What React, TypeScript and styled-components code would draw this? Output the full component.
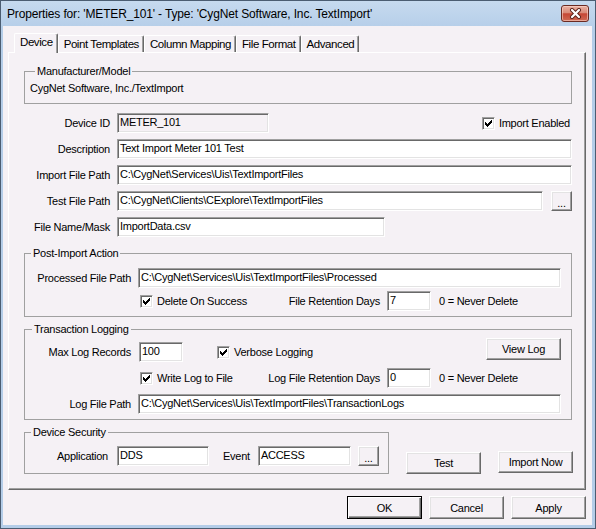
import React from 'react';
import styled, { createGlobalStyle, css } from 'styled-components';

const BG = '#f5f1f5';
const FONT = `"Liberation Sans", Arial, sans-serif`;

const Global = createGlobalStyle`
  html, body { margin: 0; padding: 0; background: #fff; }
  body { font-family: ${FONT}; font-size: 11px; color: #000; }
  * { box-sizing: border-box; }
`;

const Window = styled.div`
  width: 596px;
  height: 529px;
  display: flex;
  flex-direction: column;
  background: linear-gradient(#c6daef, #b4cde8 30px);
  border: 1px solid #4b5d72;
  padding: 0 3px 3px 2px;
`;

const TitleBar = styled.div`
  height: 25px;
  display: flex;
  align-items: center;
  justify-content: space-between;
  padding: 0 3px 0 4px;
`;

const Title = styled.span`
  font-size: 12px;
  letter-spacing: -0.15px;
  white-space: nowrap;
  color: #000;
`;

const CloseButton = styled.div`
  width: 28px;
  height: 17px;
  border: 1px solid #6b2a22;
  border-radius: 3px;
  background: linear-gradient(#eab1a3 0%, #d98a78 45%, #c64634 52%, #cf6a55 100%);
  box-shadow: inset 0 0 0 1px rgba(255, 220, 210, 0.55);
  display: flex;
  align-items: center;
  justify-content: center;
`;

const Client = styled.div`
  flex: 1;
  background: ${BG};
  padding: 7px 6px 6px 5px;
  display: flex;
  flex-direction: column;
`;

const TabStrip = styled.div`
  display: flex;
  align-items: flex-end;
  padding-left: 6px;
`;

const Tab = styled.div<{ $active?: boolean }>`
  height: 17px;
  padding: 0 4px 0 5px;
  line-height: 16px;
  font-size: 11.5px;
  letter-spacing: -0.42px;
  white-space: nowrap;
  background: ${BG};
  border-top: 1px solid #fff;
  border-left: 1px solid #fff;
  border-right: 1px solid #696969;
  box-shadow: inset -1px 0 #a0a0a0;
  border-radius: 2px 2px 0 0;
  ${(p) =>
    p.$active &&
    css`
      height: 20px;
      padding-bottom: 3px;
      margin-bottom: -1px;
      position: relative;
      z-index: 1;
    `}
`;

const Panel = styled.div`
  border-top: 1px solid #fff;
  border-left: 1px solid #fff;
  border-right: 1px solid #696969;
  border-bottom: 1px solid #696969;
  box-shadow: inset -1px -1px #a0a0a0;
  padding: 12px 13px 15px 15px;
  display: flex;
  flex-direction: column;
`;

const GroupBox = styled.fieldset<{ $pt: number; $pb: number; $mt?: number; $w?: number }>`
  margin: ${(p) => p.$mt ?? 0}px 0 0 0;
  min-width: 0;
  ${(p) => (p.$w ? `width: ${p.$w}px; flex: none;` : '')}
  border: 1px solid #a0a0a0;
  padding: ${(p) => p.$pt}px 0 ${(p) => p.$pb}px 0;
`;

const Legend = styled.legend<{ $inset: number }>`
  margin-left: ${(p) => p.$inset}px;
  padding: 0 2px;
  line-height: 13px;
  font-size: 11px;
  letter-spacing: -0.25px;
  white-space: nowrap;
`;

const PlainText = styled.div`
  padding-left: 5px;
  line-height: 13px;
  letter-spacing: -0.25px;
  white-space: nowrap;
`;

const FormGrid = styled.div<{ $labelW: number; $rowGap: number; $mt?: number; $px?: string; $rows?: string }>`
  display: grid;
  grid-template-columns: ${(p) => p.$labelW}px 1fr;
  ${(p) => (p.$rows ? `grid-template-rows: ${p.$rows};` : 'grid-auto-rows: 20px;')}
  column-gap: 7px;
  row-gap: ${(p) => p.$rowGap}px;
  align-items: center;
  margin-top: ${(p) => p.$mt ?? 0}px;
  padding: ${(p) => p.$px ?? '0'};
`;

const Label = styled.div<{ $end?: boolean }>`
  height: 20px;
  line-height: 20px;
  text-align: right;
  white-space: nowrap;
  letter-spacing: -0.25px;
  ${(p) => (p.$end ? 'align-self: end;' : '')}
`;

const Field = styled.div<{ $end?: boolean }>`
  display: flex;
  align-items: center;
  min-width: 0;
  ${(p) => (p.$end ? 'align-self: stretch; align-items: flex-end;' : '')}
`;

const Spacer = styled.div`
  flex: 1;
`;

const TextBox = styled.div<{ $w?: number; $disabled?: boolean; $ml?: number }>`
  height: 20px;
  ${(p) => (p.$w ? `width: ${p.$w}px; flex: none;` : 'flex: 1; min-width: 0;')}
  margin-left: ${(p) => p.$ml ?? 0}px;
  border: 1px solid;
  border-color: #a0a0a0 #fff #fff #a0a0a0;
  box-shadow: inset 1px 1px #696969, inset -1px -1px #e3e3e3;
  background: ${(p) => (p.$disabled ? BG : '#fff')};
  padding: 0 3px 0 2px;
  line-height: 17px;
  letter-spacing: -0.25px;
  white-space: nowrap;
  overflow: hidden;
`;

const Button = styled.button<{ $w: number; $h: number; $ml?: number; $mb?: number; $primary?: boolean; $self?: string }>`
  width: ${(p) => p.$w}px;
  height: ${(p) => p.$h}px;
  flex: none;
  margin: 0 0 ${(p) => p.$mb ?? 0}px ${(p) => p.$ml ?? 0}px;
  ${(p) => (p.$self ? `align-self: ${p.$self};` : '')}
  padding: 0;
  font-family: ${FONT};
  font-size: 11px;
  letter-spacing: -0.25px;
  color: #000;
  background: ${BG};
  border: 1px solid;
  border-color: #fff #696969 #696969 #fff;
  box-shadow: inset -1px -1px #a0a0a0, inset 1px 1px #e3e3e3;
  ${(p) =>
    p.$primary &&
    css`
      border-color: #000;
      box-shadow: inset 1px 1px #fff, inset -1px -1px #696969, inset -2px -2px #a0a0a0;
    `}
`;

const EllipsisButton = styled(Button)`
  line-height: 1;
  padding-top: 5px;
`;

const CheckOption = styled.div<{ $ml?: number; $mr?: number }>`
  display: flex;
  align-items: center;
  gap: 4px;
  height: 20px;
  margin-left: ${(p) => p.$ml ?? 0}px;
  margin-right: ${(p) => p.$mr ?? 0}px;
  white-space: nowrap;
  letter-spacing: -0.25px;
`;

const Box = styled.span`
  width: 13px;
  height: 13px;
  flex: none;
  border: 1px solid;
  border-color: #a0a0a0 #fff #fff #a0a0a0;
  box-shadow: inset 1px 1px #696969, inset -1px -1px #e3e3e3;
  background: #fff;
  display: flex;
  align-items: center;
  justify-content: center;
`;

const Note = styled.div`
  width: 122px;
  flex: none;
  margin-left: 8px;
  white-space: nowrap;
  letter-spacing: -0.25px;
`;

const Row = styled.div<{ $mt?: number }>`
  display: flex;
  align-items: flex-end;
  margin-top: ${(p) => p.$mt ?? 0}px;
`;

const InlineFields = styled.div`
  display: flex;
  align-items: center;
  padding: 0 9px;
`;

const InlineLabel = styled.div<{ $ml?: number; $w?: number }>`
  margin-left: ${(p) => p.$ml ?? 0}px;
  margin-right: 8px;
  ${(p) => (p.$w ? `width: ${p.$w}px; text-align: right; margin-right: 9px;` : '')}
  flex: none;
  white-space: nowrap;
  letter-spacing: -0.25px;
`;

const ButtonRow = styled.div`
  display: flex;
  justify-content: flex-end;
  gap: 7px;
  margin-top: 6px;
`;

const CheckMark = () => (
  <svg width="7" height="7" viewBox="0 0 7 7" shapeRendering="crispEdges">
    <path
      fill="#000"
      d="M0 2h1v3H0z M1 3h1v3H1z M2 4h1v3H2z M3 3h1v3H3z M4 2h1v3H4z M5 1h1v3H5z M6 0h1v3H6z"
    />
  </svg>
);

const Check = ({ label, ml, mr }: { label: string; ml?: number; mr?: number }) => (
  <CheckOption $ml={ml} $mr={mr}>
    <Box>
      <CheckMark />
    </Box>
    <span>{label}</span>
  </CheckOption>
);

const Retention = ({ check, label, value }: { check: string; label: string; value: string }) => (
  <Field>
    <Check label={check} ml={2} />
    <Spacer />
    <InlineLabel>{label}</InlineLabel>
    <TextBox $w={44} $ml={-1}>{value}</TextBox>
    <Note>0 = Never Delete</Note>
  </Field>
);

export default function App() {
  const tabs = ['Device', 'Point Templates', 'Column Mapping', 'File Format', 'Advanced'];
  return (
    <>
      <Global />
      <Window>
        <TitleBar>
          <Title>Properties for: 'METER_101' - Type: 'CygNet Software, Inc. TextImport'</Title>
          <CloseButton>
            <svg width="13" height="11" viewBox="0 0 13 11">
              <path d="M3 2 L10 9 M10 2 L3 9" stroke="#5a2119" strokeWidth="4" strokeLinecap="round" />
              <path d="M3 2 L10 9 M10 2 L3 9" stroke="#fff" strokeWidth="2.2" strokeLinecap="round" />
            </svg>
          </CloseButton>
        </TitleBar>
        <Client>
          <TabStrip>
            {tabs.map((t, i) => (
              <Tab key={t} $active={i === 0}>
                {t}
              </Tab>
            ))}
          </TabStrip>
          <Panel>
            <GroupBox $pt={4} $pb={8}>
              <Legend $inset={10}>Manufacturer/Model</Legend>
              <PlainText>CygNet Software, Inc./TextImport</PlainText>
            </GroupBox>

            <FormGrid $labelW={86} $rowGap={6} $mt={9}>
              <Label>Device ID</Label>
              <Field>
                <TextBox $w={152} $disabled>
                  METER_101
                </TextBox>
                <Spacer />
                <Check label="Import Enabled" mr={2} />
              </Field>
              <Label>Description</Label>
              <Field>
                <TextBox>Text Import Meter 101 Test</TextBox>
              </Field>
              <Label>Import File Path</Label>
              <Field>
                <TextBox>C:\CygNet\Services\Uis\TextImportFiles</TextBox>
              </Field>
              <Label>Test File Path</Label>
              <Field>
                <TextBox>C:\CygNet\Clients\CExplore\TextImportFiles</TextBox>
                <EllipsisButton $w={21} $h={20} $ml={8}>
                  ...
                </EllipsisButton>
              </Field>
              <Label>File Name/Mask</Label>
              <Field>
                <TextBox $w={268}>ImportData.csv</TextBox>
              </Field>
            </FormGrid>

            <GroupBox $pt={8} $pb={5} $mt={10}>
              <Legend $inset={6}>Post-Import Action</Legend>
              <FormGrid $labelW={97} $rowGap={3} $px="0 10px 0 9px">
                <Label>Processed File Path</Label>
                <Field>
                  <TextBox>C:\CygNet\Services\Uis\TextImportFiles\Processed</TextBox>
                </Field>
                <span />
                <Retention check="Delete On Success" label="File Retention Days" value="7" />
              </FormGrid>
            </GroupBox>

            <GroupBox $pt={2} $pb={5} $mt={6}>
              <Legend $inset={7}>Transaction Logging</Legend>
              <FormGrid $labelW={97} $rowGap={6} $px="0 10px 0 9px" $rows="24px 20px 20px">
                <Label $end>Max Log Records</Label>
                <Field $end>
                  <TextBox $w={44} $ml={1}>
                    100
                  </TextBox>
                  <Check label="Verbose Logging" ml={34} />
                  <Spacer />
                  <Button $w={75} $h={22} $self="flex-start">
                    View Log
                  </Button>
                </Field>
                <span />
                <Retention check="Write Log to File" label="Log File Retention Days" value="0" />
                <Label>Log File Path</Label>
                <Field>
                  <TextBox>C:\CygNet\Services\Uis\TextImportFiles\TransactionLogs</TextBox>
                </Field>
              </FormGrid>
            </GroupBox>

            <Row $mt={6}>
              <GroupBox $pt={7} $pb={7} $w={365}>
                <Legend $inset={6}>Device Security</Legend>
                <InlineFields>
                  <InlineLabel $w={74}>Application</InlineLabel>
                  <TextBox $w={92}>DDS</TextBox>
                  <InlineLabel $ml={14}>Event</InlineLabel>
                  <TextBox $w={93}>ACCESS</TextBox>
                  <EllipsisButton $w={21} $h={20} $ml={7}>
                    ...
                  </EllipsisButton>
                </InlineFields>
              </GroupBox>
              <Button $w={75} $h={22} $ml={17}>
                Test
              </Button>
              <Button $w={75} $h={22} $ml={17} $mb={1}>
                Import Now
              </Button>
            </Row>
          </Panel>
          <ButtonRow>
            <Button $w={75} $h={23} $primary>
              OK
            </Button>
            <Button $w={75} $h={23}>
              Cancel
            </Button>
            <Button $w={75} $h={23}>
              Apply
            </Button>
          </ButtonRow>
        </Client>
      </Window>
    </>
  );
}
